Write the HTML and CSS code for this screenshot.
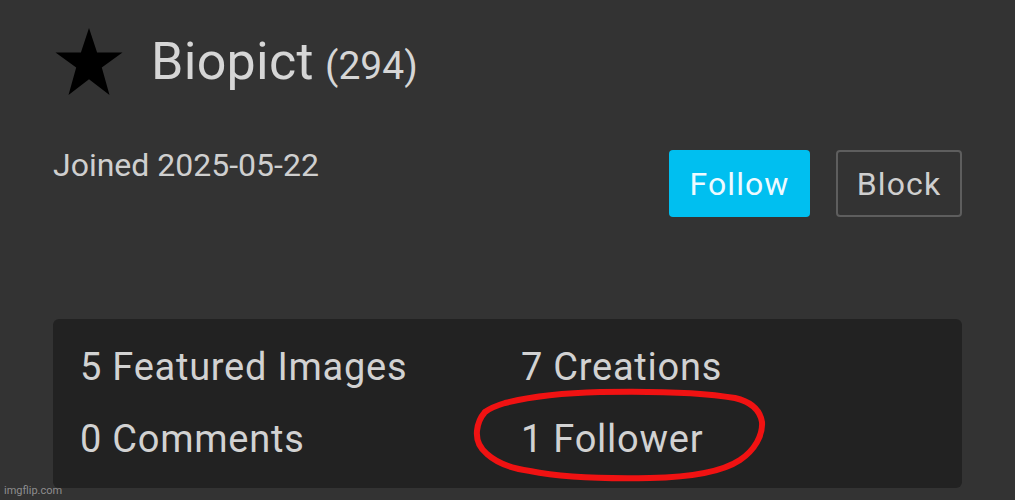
FILE: index.html
```html
<!DOCTYPE html>
<html>
<head>
<meta charset="utf-8">
<link rel="stylesheet" href="styles.css">
</head>
<body>
<div class="page">
  <div class="header">
    <svg class="star" viewBox="0 0 68 68" width="68" height="68">
      <polygon points="34,0 42.1,24.5 67.5,24.5 46.8,39.6 54.5,67 34,51.2 13.5,67 21.2,39.6 0.5,24.5 25.9,24.5" fill="#000"/>
    </svg>
    <div class="name">Biopict <span class="score">(294)</span></div>
  </div>
  <div class="meta">
    <div class="joined">Joined 2025-05-22</div>
    <div class="actions">
      <button class="btn btn-follow">Follow</button>
      <button class="btn btn-block">Block</button>
    </div>
  </div>
  <div class="stats">
    <div class="stat">5 Featured Images</div>
    <div class="stat">7 Creations</div>
    <div class="stat">0 Comments</div>
    <div class="stat">1 Follower</div>
  </div>
</div>
<svg class="annotation" viewBox="0 0 1015 500" width="1015" height="500">
  <path d="M 485 412 C 478 420, 470 440, 487 454 C 498 464, 515 469, 530 471 C 560 477, 600 479, 650 478 C 700 477, 725 470, 740 460 C 755 450, 763 435, 762 422 C 760 410, 752 402, 735 398 C 700 392, 650 391, 600 392 C 560 393, 525 398, 505 403 C 495 406, 489 409, 485 412"
        fill="none" stroke="#f01212" stroke-width="6" stroke-linecap="round" stroke-linejoin="round"/>
</svg>
<div class="watermark">imgflip.com</div>
</body>
</html>
```
FILE: styles.css
```css
html, body {
  margin: 0;
  padding: 0;
}
body {
  width: 1015px;
  height: 500px;
  overflow: hidden;
  background: #333333;
  font-family: Roboto, "Liberation Sans", sans-serif;
  color: #d2d2d2;
  position: relative;
}
.page {
  padding: 28px 53px 0 53px;
}
.header {
  display: flex;
  align-items: flex-start;
  height: 67px;
}
.star {
  display: block;
  width: 68px;
  height: 68px;
  margin-left: 2px;
}
.name {
  margin-left: 28px;
  font-size: 52px;
  line-height: 67px;
  color: #d6d6d6;
  white-space: nowrap;
  letter-spacing: 0.3px;
}
.score {
  font-size: 39px;
  letter-spacing: 0;
  margin-left: -2px;
}
.meta {
  margin-top: 55px;
  display: flex;
  justify-content: space-between;
  align-items: flex-start;
}
.joined {
  font-size: 32px;
  line-height: 37px;
  margin-top: -3px;
  color: #cfcfcf;
}
.actions {
  display: flex;
  gap: 26px;
}
.btn {
  height: 67px;
  font-family: Roboto, "Liberation Sans", sans-serif;
  font-size: 32px;
  letter-spacing: 1.1px;
  border-radius: 4px;
  padding: 0;
  cursor: pointer;
}
.btn-follow {
  width: 141px;
  background: #00bff0;
  border: none;
  color: #eefaff;
}
.btn-block {
  width: 126px;
  background: transparent;
  border: 2px solid #5e5e5e;
  color: #cfcfcf;
}
.stats {
  margin-top: 102px;
  height: 169px;
  box-sizing: border-box;
  background: #222222;
  border-radius: 6px;
  padding: 12px 0 13px 27px;
  display: grid;
  grid-template-columns: 441px 1fr;
  grid-auto-rows: 72px;
}
.stat {
  font-size: 38px;
  line-height: 72px;
  letter-spacing: 0.75px;
  color: #d2d2d2;
  white-space: nowrap;
}
.annotation {
  position: absolute;
  left: 0;
  top: 0;
  pointer-events: none;
}
.watermark {
  position: absolute;
  left: 4px;
  bottom: 3px;
  font-size: 11px;
  line-height: 13px;
  color: rgba(220, 220, 220, 0.55);
}
```
